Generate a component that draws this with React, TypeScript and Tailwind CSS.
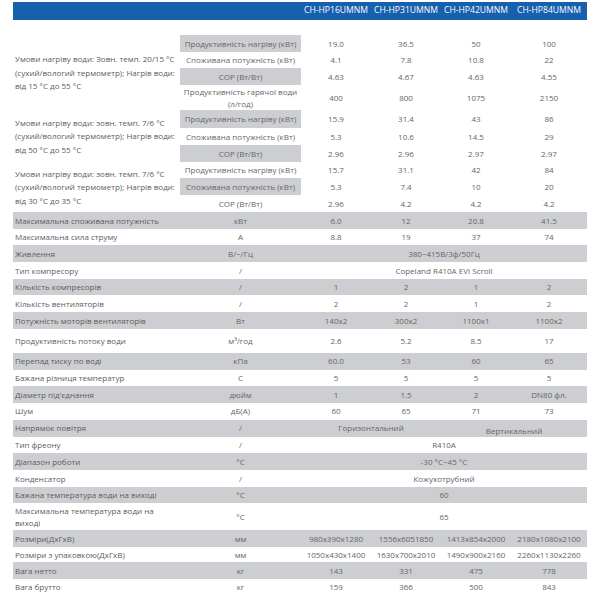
type SubRow = { sub: string[]; v: string[]; grey?: boolean; h: number }
type Section = { label: string[]; rows: SubRow[] }
type MainRow = { label: string[]; unit: string; v: string[]; h?: number; vertical?: boolean }

const models = ["CH-HP16UMNM", "CH-HP31UMNM", "CH-HP42UMNM", "CH-HP84UMNM"]

const sections: Section[] = [
  {
    label: ["Умови нагріву води: Зовн. темп. 20/15 °C", "(сухий/вологий термометр); Нагрів води:", "від 15 °C до 55 °C"],
    rows: [
      { sub: ["Продуктивність нагріву (кВт)"], v: ["19.0", "36.5", "50", "100"], grey: true, h: 17 },
      { sub: ["Споживана потужність (кВт)"], v: ["4.1", "7.8", "10.8", "22"], h: 16 },
      { sub: ["COP (Вт/Вт)"], v: ["4.63", "4.67", "4.63", "4.55"], grey: true, h: 17 },
      { sub: ["Продуктивність гарячої води", "(л/год)"], v: ["400", "800", "1075", "2150"], h: 25 },
    ],
  },
  {
    label: ["Умови нагріву води: зовн. темп. 7/6 °C", "(сухий/вологий термометр); Нагрів води:", "від 50 °C до 55 °C"],
    rows: [
      { sub: ["Продуктивність нагріву (кВт)"], v: ["15.9", "31.4", "43", "86"], grey: true, h: 18 },
      { sub: ["Споживана потужність (кВт)"], v: ["5.3", "10.6", "14.5", "29"], h: 17 },
      { sub: ["COP (Вт/Вт)"], v: ["2.96", "2.96", "2.97", "2.97"], grey: true, h: 17 },
    ],
  },
  {
    label: ["Умови нагріву води: зовн. темп. 7/6 °C", "(сухий/вологий термометр); Нагрів води:", "від 30 °C до 35 °C"],
    rows: [
      { sub: ["Продуктивність нагріву (кВт)"], v: ["15.7", "31.1", "42", "84"], h: 16 },
      { sub: ["Споживана потужність (кВт)"], v: ["5.3", "7.4", "10", "20"], grey: true, h: 17 },
      { sub: ["COP (Вт/Вт)"], v: ["2.96", "4.2", "4.2", "4.2"], h: 17 },
    ],
  },
]

const mainRows: MainRow[] = [
  { label: ["Максимальна споживана потужність"], unit: "кВт", v: ["6.0", "12", "20.8", "41.5"] },
  { label: ["Максимальна сила струму"], unit: "A", v: ["8.8", "19", "37", "74"] },
  { label: ["Живлення"], unit: "В/~/Гц", v: ["380~415В/3ф/50Гц"] },
  { label: ["Тип компресору"], unit: "/", v: ["Copeland R410A EVI Scroll"] },
  { label: ["Кількість компресорів"], unit: "/", v: ["1", "2", "1", "2"] },
  { label: ["Кількість вентиляторів"], unit: "/", v: ["2", "2", "1", "2"] },
  { label: ["Потужність моторів вентиляторів"], unit: "Вт", v: ["140x2", "300x2", "1100x1", "1100x2"] },
  { label: ["Продуктивність потоку води"], unit: "м³/год", v: ["2.6", "5.2", "8.5", "17"], h: 24 },
  { label: ["Перепад тиску по воді"], unit: "кПа", v: ["60.0", "53", "60", "65"] },
  { label: ["Бажана різниця температур"], unit: "C", v: ["5", "5", "5", "5"] },
  { label: ["Діаметр під'єднання"], unit: "дюйм", v: ["1", "1.5", "2", "DN80 фл."] },
  { label: ["Шум"], unit: "дБ(А)", v: ["60", "65", "71", "73"] },
  { label: ["Напрямок повітря"], unit: "/", v: ["Горизонтальний", "Вертикальний"], vertical: true },
  { label: ["Тип фреону"], unit: "/", v: ["R410A"] },
  { label: ["Діапазон роботи"], unit: "°C", v: ["-30 °C~45 °C"] },
  { label: ["Конденсатор"], unit: "/", v: ["Кожухотрубний"] },
  { label: ["Бажана температура води на виході"], unit: "°C", v: ["60"] },
  { label: ["Максимальна температура води на", "виході"], unit: "°C", v: ["65"], h: 27 },
  { label: ["Розміри(ДхГхВ)"], unit: "мм", v: ["980x390x1280", "1556x6051850", "1413x854x2000", "2180x1080x2100"] },
  { label: ["Розміри з упаковкою(ДхГхВ)"], unit: "мм", v: ["1050x430x1400", "1630x700x2010", "1490x900x2160", "2260x1130x2260"], h: 15 },
  { label: ["Вага нетто"], unit: "кг", v: ["143", "331", "475", "778"] },
  { label: ["Вага брутто"], unit: "кг", v: ["159", "366", "500", "843"], h: 16 },
]

function Values({ v, vertical }: { v: string[]; vertical?: boolean }) {
  const span = 4 / v.length
  return (
    <>
      {v.map((t, i) => (
        <td
          key={i}
          colSpan={span}
          className={
            vertical && i === 1
              ? "p-0 pt-[5px] align-top text-center leading-[12px] whitespace-nowrap"
              : "p-0 text-center align-middle whitespace-nowrap"
          }
        >
          {t}
        </td>
      ))}
    </>
  )
}

export default function App() {
  return (
    <div className="w-[600px] h-[600px] bg-white overflow-hidden pt-[2px] pl-[13px] font-['Open_Sans',sans-serif] text-[8px] leading-[13.5px] text-[#666]">
      <table className="table-fixed border-collapse w-[574px]">
        <colgroup>
          <col className="w-[167px]" />
          <col className="w-[121px]" />
          <col className="w-[70px]" />
          <col className="w-[70px]" />
          <col className="w-[70px]" />
          <col className="w-[76px]" />
        </colgroup>
        <tbody>
          {/* header */}
          <tr className="h-[18px] bg-[#1660ae] text-white text-[8.6px]">
            <td className="p-0" />
            <td className="p-0" />
            {models.map((m) => (
              <td key={m} className="p-0 text-center whitespace-nowrap">
                {m}
              </td>
            ))}
          </tr>
          <tr className="h-[15px]">
            <td colSpan={6} className="p-0" />
          </tr>

          {/* heating conditions */}
          {sections.map((s, si) =>
            s.rows.map((r, ri) => (
              <tr key={`${si}-${ri}`} style={{ height: r.h }}>
                {ri === 0 && (
                  <td rowSpan={s.rows.length} className="p-0 pl-[2px] align-middle bg-white text-[#5c5c5c] whitespace-nowrap">
                    {s.label.map((l, li) => (
                      <div key={li}>{l}</div>
                    ))}
                  </td>
                )}
                <td className={`p-0 text-center align-middle whitespace-nowrap ${r.grey ? "bg-[#cdced1]" : "bg-white"}`}>
                  {r.sub.map((l, li) => (
                    <div key={li} className={r.sub.length > 1 ? "leading-[12px]" : ""}>
                      {l}
                    </div>
                  ))}
                </td>
                <Values v={r.v} />
              </tr>
            ))
          )}

          {/* general specs */}
          {mainRows.map((r, i) => (
            <tr key={r.label[0]} style={{ height: r.h ?? 16.7 }} className={i % 2 === 0 ? "bg-[#cdced1]" : "bg-white"}>
              <td className="p-0 pl-[2px] align-middle text-[#5c5c5c] whitespace-nowrap">
                {r.label.map((l, li) => (
                  <div key={li} className={r.label.length > 1 ? "leading-[12px]" : ""}>
                    {l}
                  </div>
                ))}
              </td>
              <td className="p-0 text-center align-middle">{r.unit}</td>
              <Values v={r.v} vertical={r.vertical} />
            </tr>
          ))}
        </tbody>
      </table>
    </div>
  )
}
